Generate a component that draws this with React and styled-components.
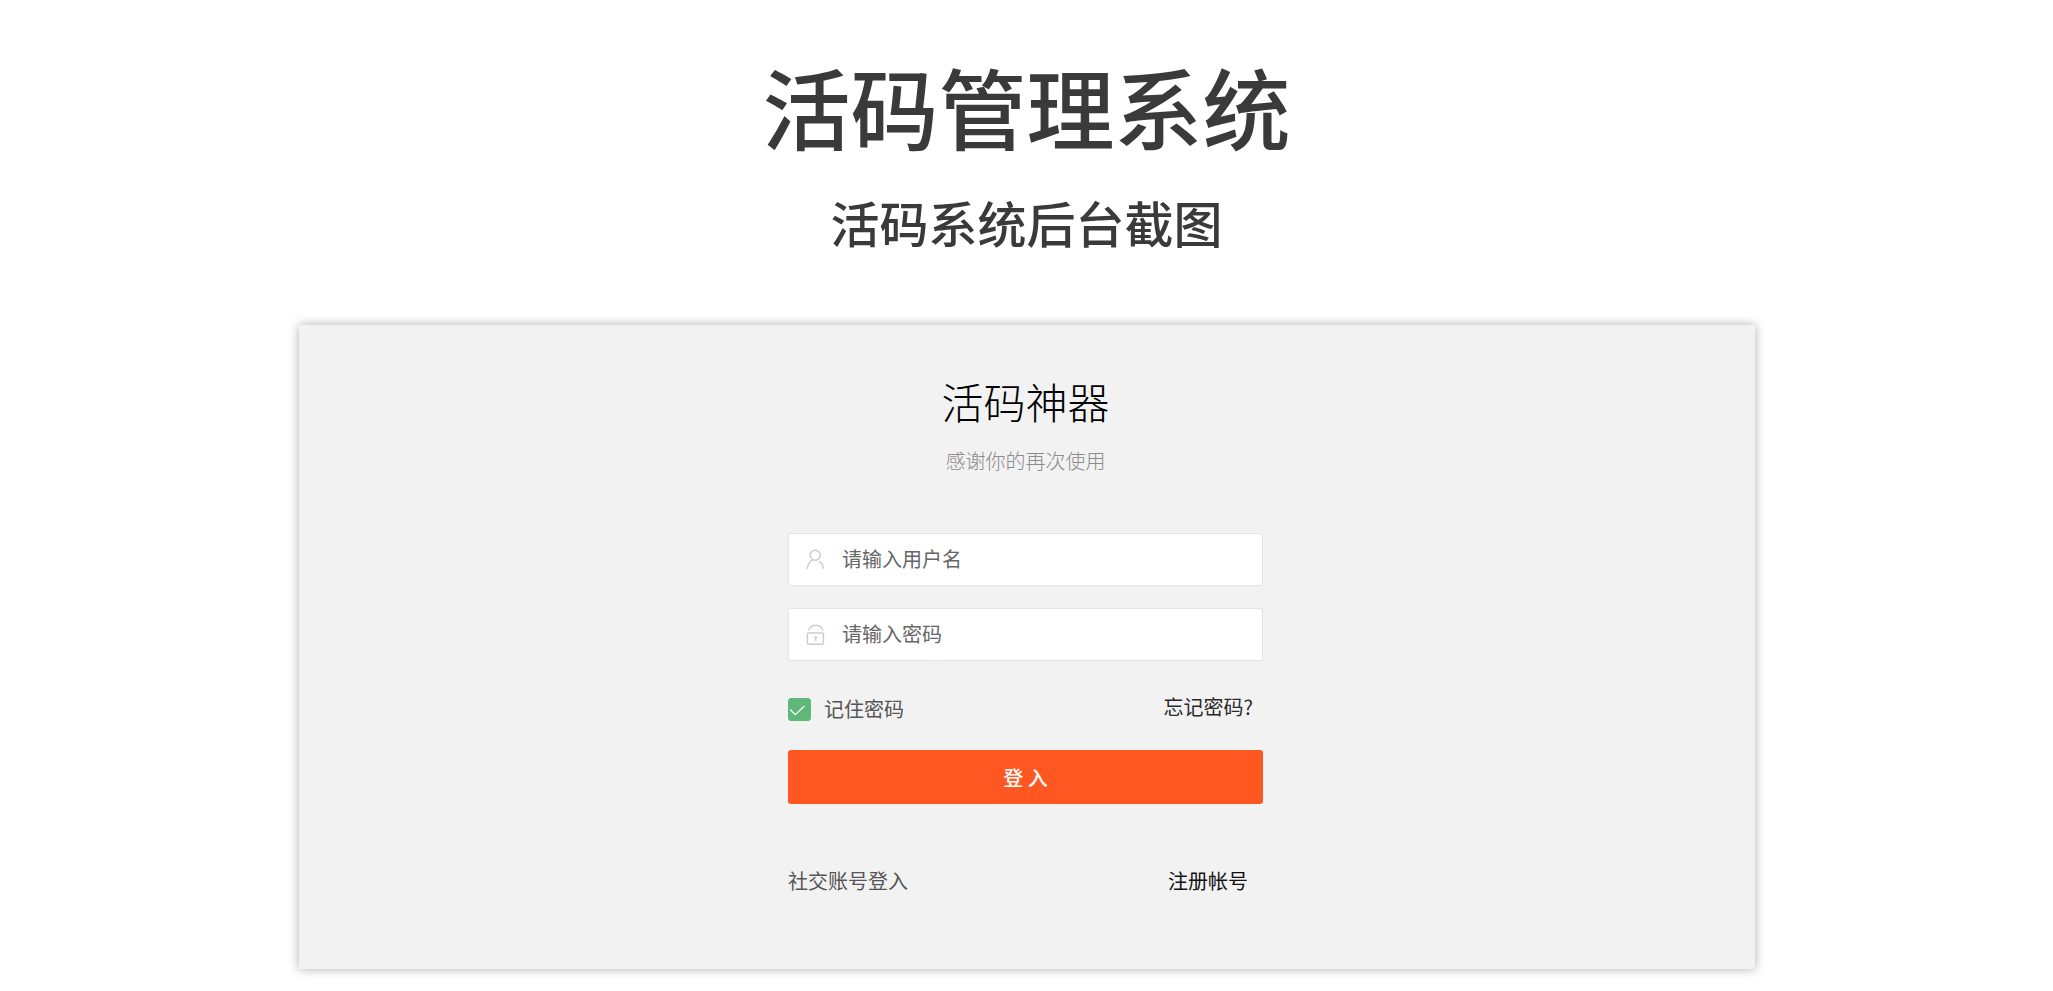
import React from "react";
import styled, { createGlobalStyle } from "styled-components";

const Global = createGlobalStyle`
  * { box-sizing: border-box; }
  body {
    margin: 0;
    background: #fff;
    color: #3a3a3a;
    font-family: "Noto Sans CJK SC", "Liberation Sans", sans-serif;
  }
  h1, h2, p { margin: 0; }
  button, input { font-family: inherit; }
`;

const Page = styled.main`
  display: flex;
  flex-direction: column;
  align-items: center;
  padding: 49px 24px 20px;
`;

const Title = styled.h1`
  font-size: 88px;
  line-height: 112px;
  font-weight: 500;
`;

const Subtitle = styled.h2`
  margin-top: 29px;
  font-size: 49px;
  line-height: 64px;
  font-weight: 500;
`;

const Panel = styled.section`
  display: flex;
  flex-direction: column;
  align-items: center;
  width: 100%;
  max-width: 1456px;
  margin-top: 71px;
  padding: 46px 2px 72px 0;
  background: #f2f2f2;
  box-shadow: 0 0 10px rgba(0, 0, 0, 0.32);
`;

const Brand = styled.h2`
  font-size: 42px;
  line-height: 60px;
  font-weight: 300;
  color: #000;
`;

const Slogan = styled.p`
  margin-top: 16px;
  font-size: 20px;
  line-height: 28px;
  font-weight: 300;
  color: #8c8c8c;
`;

const Form = styled.form`
  display: flex;
  flex-direction: column;
  width: 475px;
  max-width: 100%;
  margin-top: 58px;
`;

const Field = styled.label`
  display: flex;
  align-items: center;
  height: 53px;
  margin-bottom: 22px;
  padding-left: 16px;
  background: #fff;
  border: 1px solid #e4e4e4;
  border-radius: 2px;
`;

const FieldIcon = styled.svg`
  flex: none;
  width: 22px;
  height: 22px;
  fill: none;
  stroke: #cdcdcd;
  stroke-width: 1.5;
  stroke-linecap: round;
`;

const Input = styled.input`
  flex: 1;
  min-width: 0;
  height: 100%;
  margin-left: 15px;
  padding: 0 0 2px;
  border: 0;
  outline: 0;
  background: none;
  font-size: 20px;
  color: #333;
  &::placeholder { color: #666; opacity: 1; }
`;

const Row = styled.div`
  display: flex;
  justify-content: space-between;
  font-size: 20px;
  line-height: 32px;
`;

const OptionsRow = styled(Row)`
  margin-top: 10px;
  padding-right: 10px;
`;

const AccountRow = styled(Row)`
  margin-top: 61px;
  padding-right: 15px;
`;

const Remember = styled.label`
  display: flex;
  align-items: center;
  gap: 13px;
  color: #555;
`;

const CheckBox = styled.span`
  display: grid;
  width: 23px;
  height: 23px;
  > * { grid-area: 1 / 1; }
`;

const Check = styled.input`
  appearance: none;
  width: 23px;
  height: 23px;
  margin: 0;
  border: 1px solid #d2d2d2;
  border-radius: 3px;
  background: #fff;
  &:checked { background: #5fb878; border-color: #5fb878; }
`;

const Tick = styled.svg`
  width: 23px;
  height: 23px;
  z-index: 1;
  pointer-events: none;
  fill: none;
  stroke: #fff;
  stroke-width: 1.3;
`;

const Link = styled.a`
  color: #111;
  text-decoration: none;
`;

const ForgotLink = styled(Link)`
  line-height: 28px;
  color: #2a2a2a;
`;

const Muted = styled.span`
  color: #555;
`;

const Submit = styled.button`
  height: 54px;
  margin-top: 25px;
  border: 0;
  border-radius: 3px;
  background: #ff5722;
  color: #fff;
  font-size: 20px;
  font-weight: 500;
`;

export default function App() {
  return (
    <>
      <Global />
      <Page>
        <Title>活码管理系统</Title>
        <Subtitle>活码系统后台截图</Subtitle>
        <Panel>
          <Brand>活码神器</Brand>
          <Slogan>感谢你的再次使用</Slogan>
          <Form onSubmit={(e) => e.preventDefault()}>
            <Field>
              <FieldIcon viewBox="0 0 22 22" aria-hidden="true">
                <circle cx="10.3" cy="6.3" r="5" />
                <path d="M2.3 19.5C2.7 15.5 4.6 12.4 7.8 10.8M14.4 12.6C16.8 14 18 16.3 18.3 19.5" />
              </FieldIcon>
              <Input aria-label="用户名" placeholder="请输入用户名" />
            </Field>
            <Field>
              <FieldIcon viewBox="0 0 22 22" aria-hidden="true">
                <rect x="2.4" y="9" width="16" height="11.3" rx="1" />
                <path d="M3.8 5.8C5.4 2.6 7.6 1.2 10.6 1.2C13.8 1.2 16.2 2.7 17.7 5.8M9.5 13.3H11.9M10.7 13.3V16.2" />
              </FieldIcon>
              <Input type="password" aria-label="密码" placeholder="请输入密码" />
            </Field>
            <OptionsRow>
              <Remember>
                <CheckBox>
                  <Check type="checkbox" defaultChecked />
                  <Tick viewBox="0 0 23 23" aria-hidden="true">
                    <path d="M2.2 11.5L7.3 16.7L16.4 8" />
                  </Tick>
                </CheckBox>
                记住密码
              </Remember>
              <ForgotLink href="#forgot">忘记密码?</ForgotLink>
            </OptionsRow>
            <Submit>登 入</Submit>
            <AccountRow>
              <Muted>社交账号登入</Muted>
              <Link href="#register">注册帐号</Link>
            </AccountRow>
          </Form>
        </Panel>
      </Page>
    </>
  );
}
